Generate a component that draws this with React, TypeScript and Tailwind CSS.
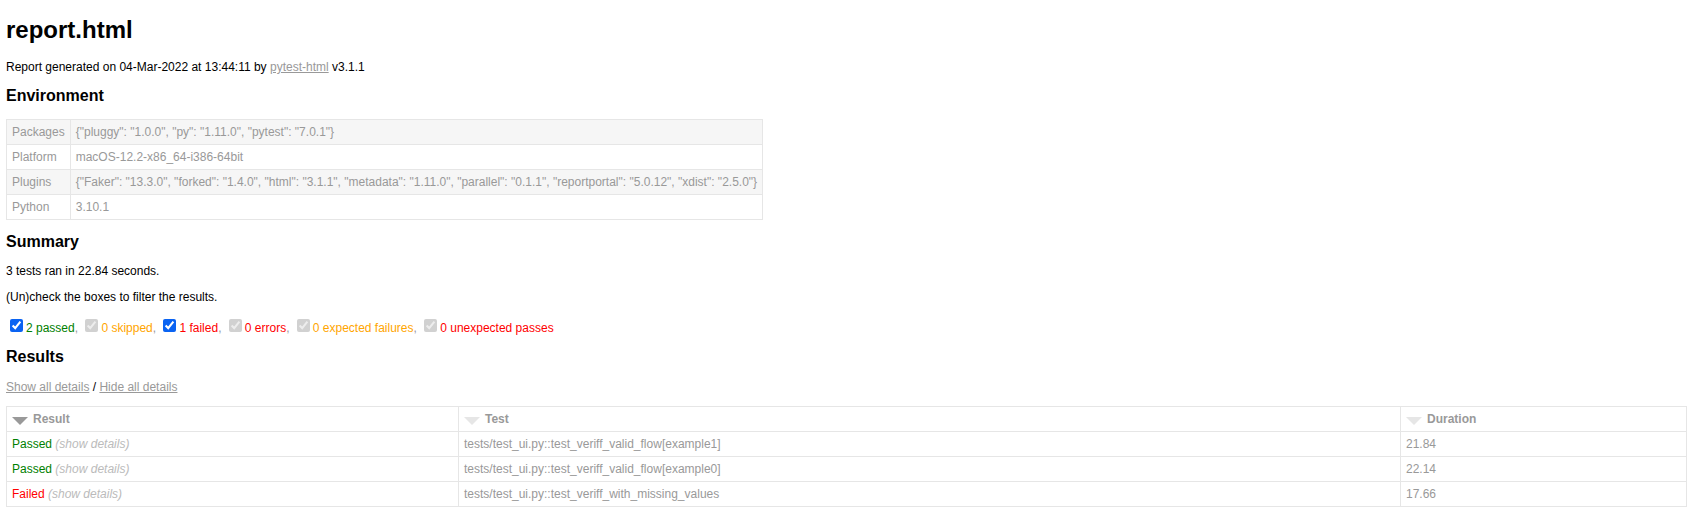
import React from 'react'

const env: [string, string][] = [
  ['Packages', '{"pluggy": "1.0.0", "py": "1.11.0", "pytest": "7.0.1"}'],
  ['Platform', 'macOS-12.2-x86_64-i386-64bit'],
  [
    'Plugins',
    '{"Faker": "13.3.0", "forked": "1.4.0", "html": "3.1.1", "metadata": "1.11.0", "parallel": "0.1.1", "reportportal": "5.0.12", "xdist": "2.5.0"}',
  ],
  ['Python', '3.10.1'],
]

const results = [
  { outcome: 'Passed', test: 'tests/test_ui.py::test_veriff_valid_flow[example1]', duration: '21.84' },
  { outcome: 'Passed', test: 'tests/test_ui.py::test_veriff_valid_flow[example0]', duration: '22.14' },
  { outcome: 'Failed', test: 'tests/test_ui.py::test_veriff_with_missing_values', duration: '17.66' },
]

// summary filters: label, colour class, checked, disabled
const filters = [
  { label: '2 passed', cls: 'text-[#008000]', disabled: false },
  { label: '0 skipped', cls: 'text-[#ffa500]', disabled: true },
  { label: '1 failed', cls: 'text-[#ff0000]', disabled: false },
  { label: '0 errors', cls: 'text-[#ff0000]', disabled: true },
  { label: '0 expected failures', cls: 'text-[#ffa500]', disabled: true },
  { label: '0 unexpected passes', cls: 'text-[#ff0000]', disabled: true },
]

const SortIcon = ({ active }: { active: boolean }) => (
  <div
    className={
      'float-left mr-[5px] mt-[5px] h-0 w-0 border-x-8 border-x-transparent border-t-8 ' +
      (active ? 'border-t-[#999]' : 'border-t-[#e6e6e6]')
    }
  />
)

export default function App() {
  return (
    <div className="min-h-screen bg-white pl-[6px] pr-[1px] pt-4 pb-4 font-['Liberation_Sans',Helvetica,Arial,sans-serif] text-[12px] leading-[normal] text-[#999]">
      <h1 className="mb-4 text-[24px] font-bold leading-[normal] text-black">report.html</h1>
      <p className="my-3 text-black">
        Report generated on 04-Mar-2022 at 13:44:11 by{' '}
        <a href="#" className="text-[#999] underline">
          pytest-html
        </a>{' '}
        v3.1.1
      </p>

      <h2 className="mt-[13.28px] mb-[13.28px] text-[16px] font-bold leading-[normal] text-black">Environment</h2>
      <table className="border-collapse">
        <tbody>
          {env.map(([k, v], i) => (
            <tr key={k} className={i % 2 === 0 ? 'bg-[#f6f6f6]' : ''}>
              <td className="border border-[#e6e6e6] p-[5px]">{k}</td>
              <td className="border border-[#e6e6e6] p-[5px]">{v}</td>
            </tr>
          ))}
        </tbody>
      </table>

      <h2 className="mt-[13.28px] mb-[13.28px] text-[16px] font-bold leading-[normal] text-black">Summary</h2>
      <p className="my-3 text-black">3 tests ran in 22.84 seconds. </p>
      <p className="my-3 text-black">(Un)check the boxes to filter the results.</p>
      <div>
        {filters.map((f, i) => (
          <React.Fragment key={f.label}>
            <input
              type="checkbox"
              defaultChecked
              disabled={f.disabled}
              className="mt-[3px] mr-[3px] mb-[3px] ml-1 accent-[#0a63f2]"
            />
            <span className={f.cls}>{f.label}</span>
            {i < filters.length - 1 ? ', ' : ''}
          </React.Fragment>
        ))}
      </div>

      <h2 className="mt-[13.28px] mb-[13.28px] text-[16px] font-bold leading-[normal] text-black">Results</h2>
      <p className="my-3 text-black">
        <a href="#" className="text-[#999] underline">
          Show all details
        </a>{' '}
        /{' '}
        <a href="#" className="text-[#999] underline">
          Hide all details
        </a>
      </p>
      <table className="w-full table-fixed border-collapse border border-[#e6e6e6] text-[12px] text-[#999]">
        <colgroup>
          <col className="w-[452px]" />
          <col className="w-[942px]" />
          <col />
        </colgroup>
        <thead>
          <tr>
            <th className="border border-[#e6e6e6] p-[5px] text-left font-bold">
              <SortIcon active />
              Result
            </th>
            <th className="border border-[#e6e6e6] p-[5px] text-left font-bold">
              <SortIcon active={false} />
              Test
            </th>
            <th className="border border-[#e6e6e6] p-[5px] text-left font-bold">
              <SortIcon active={false} />
              Duration
            </th>
          </tr>
        </thead>
        <tbody>
          {results.map((r) => (
            <tr key={r.test}>
              <td className="border border-[#e6e6e6] p-[5px]">
                <span className={r.outcome === 'Passed' ? 'text-[#008000]' : 'text-[#ff0000]'}>{r.outcome}</span>
                <span className="italic text-[#bbb]"> (show details)</span>
              </td>
              <td className="border border-[#e6e6e6] p-[5px]">{r.test}</td>
              <td className="border border-[#e6e6e6] p-[5px]">{r.duration}</td>
            </tr>
          ))}
        </tbody>
      </table>
    </div>
  )
}
